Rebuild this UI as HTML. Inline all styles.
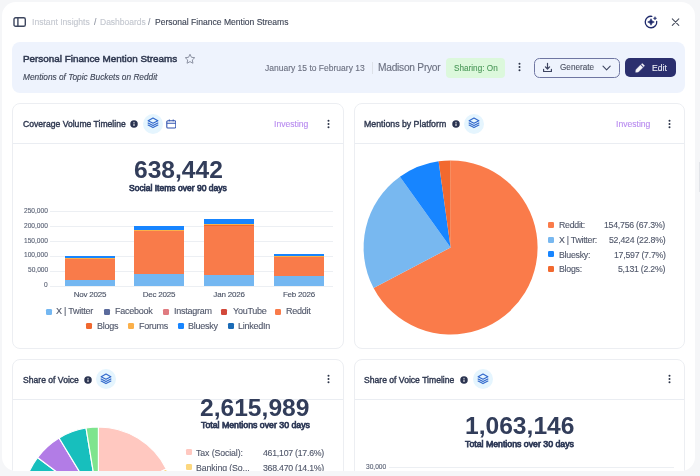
<!DOCTYPE html>
<html><head><meta charset="utf-8">
<style>
*{box-sizing:border-box;margin:0;padding:0}
html,body{width:700px;height:476px;overflow:hidden;background:#f5f6f8;font-family:"Liberation Sans",sans-serif}
.abs{position:absolute}
#panel{position:absolute;left:2px;top:2px;width:693.3px;height:468.7px;background:#fff;border-radius:14px;overflow:hidden}
#inner{position:absolute;left:-2px;top:-2px;width:700px;height:476px}
.t{position:absolute;white-space:nowrap;line-height:1;will-change:transform;-webkit-text-stroke:0.12px currentColor}
.card{position:absolute;background:#fff;border:1px solid #eceef2;border-radius:8px;overflow:hidden}
.ch{position:absolute;left:0;right:0;top:0;height:40px;border-bottom:1px solid #eaedf2}
</style></head><body>
<div id="panel"><div id="inner">
<svg class="abs" style="left:13px;top:17px" width="13" height="10" viewBox="0 0 13 10"><rect x="1" y="0.75" width="11.3" height="8.5" rx="1.6" fill="none" stroke="#3d465e" stroke-width="1.4"/><line x1="4.9" y1="1" x2="4.9" y2="9" stroke="#3d465e" stroke-width="1.4"/></svg>
<div class="t" style="left:32.30px;top:17.62px;font-size:8.6px;color:#c3c7cf;">Instant Insights</div>
<div class="t" style="left:93.60px;top:17.62px;font-size:8.6px;color:#8c92a0;">/</div>
<div class="t" style="left:100.10px;top:17.70px;font-size:8.5px;color:#c3c7cf;">Dashboards</div>
<div class="t" style="left:148.40px;top:17.62px;font-size:8.6px;color:#8c92a0;">/</div>
<div class="t" style="left:154.60px;top:17.66px;font-size:8.55px;color:#3d4455;">Personal Finance Mention Streams</div>
<svg class="abs" style="left:644px;top:15px" width="14" height="14" viewBox="0 0 14 14"><path d="M12.7 6.3 A5.75 5.75 0 1 1 7.8 1.3" fill="none" stroke="#1f2a6b" stroke-width="1.3" stroke-linecap="round"/><path d="M7 3.7 Q7.5 6.5 10.3 7 Q7.5 7.5 7 10.3 Q6.5 7.5 3.7 7 Q6.5 6.5 7 3.7 Z" fill="#1f2a6b" stroke="#1f2a6b" stroke-width="0.6" stroke-linejoin="round"/><path d="M11 1.6 Q11.2 3.1 12.7 3.3 Q11.2 3.5 11 5 Q10.8 3.5 9.3 3.3 Q10.8 3.1 11 1.6 Z" fill="#1f2a6b" stroke="#1f2a6b" stroke-width="0.4" stroke-linejoin="round"/></svg>
<svg class="abs" style="left:671px;top:18px" width="9" height="9" viewBox="0 0 9 9"><path d="M1.3 0.9 L7.8 7.4 M7.8 0.9 L1.3 7.4" stroke="#4a5060" stroke-width="1.1" stroke-linecap="round"/></svg>
<div class="abs" style="left:12px;top:42px;width:673px;height:51px;background:#eef3fd;border-radius:8px"></div>
<div class="t" style="left:22.60px;top:53.84px;font-size:9.88px;color:#2f3850;-webkit-text-stroke:0.5px currentColor;">Personal Finance Mention Streams</div>
<div class="t" style="left:22.60px;top:73.27px;font-size:8.3px;color:#3e4556;font-style:italic;">Mentions of Topic Buckets on Reddit</div>
<svg class="abs" style="left:184px;top:53px" width="12" height="12" viewBox="0 0 24 24"><path d="M12 2.5 L14.9 8.6 L21.5 9.4 L16.6 13.9 L17.9 20.5 L12 17.2 L6.1 20.5 L7.4 13.9 L2.5 9.4 L9.1 8.6 Z" fill="none" stroke="#8c92a3" stroke-width="2" stroke-linejoin="round"/></svg>
<div class="t" style="left:265.10px;top:63.80px;font-size:8.5px;color:#6b7080;">January 15 to February 13</div>
<div class="abs" style="left:371.5px;top:61.5px;width:1px;height:12px;background:#dde1e8"></div>
<div class="t" style="left:377.80px;top:62.77px;font-size:10.2px;color:#6b7080;letter-spacing:-0.25px;">Madison Pryor</div>
<div class="abs" style="left:446px;top:57.6px;width:59px;height:20px;background:#dcf8dc;border-radius:4px"></div>
<div class="t" style="left:453.70px;top:65.36px;font-size:8.2px;color:#4e9a5c;">Sharing: On</div>
<svg class="abs" style="left:518.2px;top:62.400000000000006px" width="3" height="10" viewBox="0 0 3 10"><circle cx="1.5" cy="1.75" r="1" fill="#2c3448"/><circle cx="1.5" cy="5" r="1" fill="#2c3448"/><circle cx="1.5" cy="8.25" r="1" fill="#2c3448"/></svg>
<div class="abs" style="left:534px;top:57.5px;width:85.5px;height:20px;border:1px solid #6f76a2;border-radius:5.5px"></div>
<svg class="abs" style="left:542px;top:62px" width="11" height="11" viewBox="0 0 11 11"><path d="M5.5 1.3 V7 M3.4 4.9 L5.5 7 L7.6 4.9 M1.6 7.4 V9.5 H9.4 V7.4" fill="none" stroke="#3d4460" stroke-width="1.2" stroke-linecap="round" stroke-linejoin="round"/></svg>
<div class="t" style="left:560.00px;top:64.26px;font-size:8.2px;color:#4d5364;">Generate</div>
<svg class="abs" style="left:602.3px;top:65px" width="10" height="6" viewBox="0 0 10 6"><path d="M1 1.2 L4.6 4.8 L8.2 1.2" fill="none" stroke="#3d4460" stroke-width="1.1" stroke-linecap="round" stroke-linejoin="round"/></svg>
<div class="abs" style="left:624.5px;top:57.8px;width:51px;height:19.4px;background:#2b2f6e;border-radius:5px"></div>
<svg class="abs" style="left:635px;top:63px" width="10" height="10" viewBox="0 0 10 10"><path d="M0.7 9.3 L0.9 6.7 L5.5 2.1 L7.9 4.5 L3.3 9.1 Z" fill="#f4f4f8" stroke="#f4f4f8" stroke-width="0.4" stroke-linejoin="round"/><path d="M6.3 1.3 L7.3 0.4 L9.6 2.7 L8.7 3.7 Z" fill="#f4f4f8" stroke="#f4f4f8" stroke-width="0.4" stroke-linejoin="round"/></svg>
<div class="t" style="left:651.80px;top:64.12px;font-size:8.6px;color:#eceef5;">Edit</div>
<div class="card" style="left:12px;top:103px;width:332px;height:246px"><div class="ch"></div></div>
<div class="card" style="left:353.5px;top:103px;width:331.5px;height:246px"><div class="ch"></div></div>
<div class="card" style="left:12px;top:359px;width:332px;height:140px"><div class="ch"></div></div>
<div class="card" style="left:353.5px;top:359px;width:331.5px;height:140px"><div class="ch"></div></div>
<div class="t" style="left:22.90px;top:119.82px;font-size:8.6px;color:#2f3850;-webkit-text-stroke:0.38px currentColor;">Coverage Volume Timeline</div>
<svg class="abs" style="left:130.2px;top:120px" width="8" height="8" viewBox="0 0 8 8"><circle cx="4" cy="4" r="3.75" fill="#2a3350"/><rect x="3.5" y="3.5" width="1" height="2.6" rx="0.3" fill="#fff"/><circle cx="4" cy="2.35" r="0.55" fill="#fff"/></svg>
<div class="abs" style="left:142.9px;top:113.5px;width:20px;height:20px;border-radius:50%;background:#e5f5fe"></div>
<svg class="abs" style="left:146.9px;top:117.3px" width="12" height="12" viewBox="0 0 12 12"><path d="M1.1 3.7 L6 1 L10.9 3.7 L6 6.3 Z" fill="none" stroke="#3168cc" stroke-width="1.1" stroke-linejoin="round"/><path d="M1.1 5.9 L6 8.4 L10.9 5.9 M1.1 8.1 L6 10.6 L10.9 8.1" fill="none" stroke="#3168cc" stroke-width="1.1" stroke-linejoin="round" stroke-linecap="round"/></svg>
<svg class="abs" style="left:166.2px;top:118.6px" width="10" height="10" viewBox="0 0 10 10"><rect x="0.8" y="1.7" width="9" height="7.3" rx="1.1" fill="none" stroke="#3153b0" stroke-width="1.1"/><line x1="0.8" y1="4.3" x2="9.8" y2="4.3" stroke="#3153b0" stroke-width="1.1"/><line x1="3.3" y1="0.5" x2="3.3" y2="2.3" stroke="#3153b0" stroke-width="1"/><line x1="7.2" y1="0.5" x2="7.2" y2="2.3" stroke="#3153b0" stroke-width="1"/></svg>
<div class="t" style="left:274.20px;top:119.62px;font-size:8.6px;color:#b88bef;">Investing</div>
<svg class="abs" style="left:326.9px;top:118.7px" width="3" height="10" viewBox="0 0 3 10"><circle cx="1.5" cy="1.75" r="1" fill="#2c3448"/><circle cx="1.5" cy="5" r="1" fill="#2c3448"/><circle cx="1.5" cy="8.25" r="1" fill="#2c3448"/></svg>
<div class="t" style="left:133.60px;top:157.78px;font-size:24.6px;color:#323d5a;font-weight:bold;-webkit-text-stroke:0;">638,442</div>
<div class="t" style="left:128.90px;top:184.15px;font-size:8.56px;color:#323d5a;-webkit-text-stroke:0.75px currentColor;">Social Items over 90 days</div>
<div class="abs" style="left:50px;top:210.70px;width:283px;height:1px;background:#eceff3"></div>
<div class="t" style="right:652.00px;top:207.51px;font-size:6.6px;color:#5a6275;">250,000</div>
<div class="abs" style="left:50px;top:225.70px;width:283px;height:1px;background:#eceff3"></div>
<div class="t" style="right:652.00px;top:222.51px;font-size:6.6px;color:#5a6275;">200,000</div>
<div class="abs" style="left:50px;top:240.70px;width:283px;height:1px;background:#eceff3"></div>
<div class="t" style="right:652.00px;top:237.51px;font-size:6.6px;color:#5a6275;">150,000</div>
<div class="abs" style="left:50px;top:255.60px;width:283px;height:1px;background:#eceff3"></div>
<div class="t" style="right:652.00px;top:252.41px;font-size:6.6px;color:#5a6275;">100,000</div>
<div class="abs" style="left:50px;top:270.60px;width:283px;height:1px;background:#eceff3"></div>
<div class="t" style="right:652.00px;top:267.41px;font-size:6.6px;color:#5a6275;">50,000</div>
<div class="abs" style="left:50px;top:285.60px;width:283px;height:1px;background:#eceff3"></div>
<div class="t" style="right:652.00px;top:282.41px;font-size:6.6px;color:#5a6275;">0</div>
<div class="abs" style="left:65px;top:279.60px;width:49.80px;height:6.50px;background:#74b7f1"></div>
<div class="abs" style="left:65px;top:258.80px;width:49.80px;height:20.80px;background:#f97b4a"></div>
<div class="abs" style="left:65px;top:258.30px;width:49.80px;height:0.50px;background:#f0682f"></div>
<div class="abs" style="left:65px;top:258.10px;width:49.80px;height:0.20px;background:#fbb04a"></div>
<div class="abs" style="left:65px;top:256.00px;width:49.80px;height:2.10px;background:#1785ff"></div>
<div class="abs" style="left:134.4px;top:274.40px;width:49.80px;height:11.70px;background:#74b7f1"></div>
<div class="abs" style="left:134.4px;top:230.90px;width:49.80px;height:43.50px;background:#f97b4a"></div>
<div class="abs" style="left:134.4px;top:230.30px;width:49.80px;height:0.60px;background:#f0682f"></div>
<div class="abs" style="left:134.4px;top:229.90px;width:49.80px;height:0.40px;background:#fbb04a"></div>
<div class="abs" style="left:134.4px;top:225.60px;width:49.80px;height:4.30px;background:#1785ff"></div>
<div class="abs" style="left:204px;top:275.30px;width:50.00px;height:10.80px;background:#74b7f1"></div>
<div class="abs" style="left:204px;top:225.20px;width:50.00px;height:50.10px;background:#f97b4a"></div>
<div class="abs" style="left:204px;top:224.50px;width:50.00px;height:0.70px;background:#f0682f"></div>
<div class="abs" style="left:204px;top:223.80px;width:50.00px;height:0.70px;background:#fbb04a"></div>
<div class="abs" style="left:204px;top:218.60px;width:50.00px;height:5.20px;background:#1785ff"></div>
<div class="abs" style="left:273.7px;top:276.00px;width:49.90px;height:10.10px;background:#74b7f1"></div>
<div class="abs" style="left:273.7px;top:256.60px;width:49.90px;height:19.40px;background:#f97b4a"></div>
<div class="abs" style="left:273.7px;top:256.20px;width:49.90px;height:0.40px;background:#f0682f"></div>
<div class="abs" style="left:273.7px;top:255.90px;width:49.90px;height:0.30px;background:#fbb04a"></div>
<div class="abs" style="left:273.7px;top:253.90px;width:49.90px;height:2.00px;background:#1785ff"></div>
<div class="t" style="left:89.90px;transform:translateX(-50%);top:290.93px;font-size:8.0px;color:#4a5265;letter-spacing:-0.2px;">Nov 2025</div>
<div class="t" style="left:159.30px;transform:translateX(-50%);top:290.93px;font-size:8.0px;color:#4a5265;letter-spacing:-0.2px;">Dec 2025</div>
<div class="t" style="left:229.00px;transform:translateX(-50%);top:290.93px;font-size:8.0px;color:#4a5265;letter-spacing:-0.2px;">Jan 2026</div>
<div class="t" style="left:298.60px;transform:translateX(-50%);top:290.93px;font-size:8.0px;color:#4a5265;letter-spacing:-0.2px;">Feb 2026</div>
<div class="abs" style="left:46.1px;top:308.50px;width:6px;height:6px;border-radius:1.3px;background:#74b7f1"></div>
<div class="t" style="left:56.40px;top:307.28px;font-size:9.0px;color:#50576a;letter-spacing:-0.25px;">X | Twitter</div>
<div class="abs" style="left:104px;top:308.50px;width:6px;height:6px;border-radius:1.3px;background:#5b6b9c"></div>
<div class="t" style="left:115.00px;top:307.28px;font-size:9.0px;color:#50576a;letter-spacing:-0.25px;">Facebook</div>
<div class="abs" style="left:162.9px;top:308.50px;width:6px;height:6px;border-radius:1.3px;background:#e07b80"></div>
<div class="t" style="left:173.60px;top:307.28px;font-size:9.0px;color:#50576a;letter-spacing:-0.25px;">Instagram</div>
<div class="abs" style="left:221.4px;top:308.50px;width:6px;height:6px;border-radius:1.3px;background:#d2483a"></div>
<div class="t" style="left:232.50px;top:307.28px;font-size:9.0px;color:#50576a;letter-spacing:-0.25px;">YouTube</div>
<div class="abs" style="left:275.4px;top:308.50px;width:6px;height:6px;border-radius:1.3px;background:#f97b4a"></div>
<div class="t" style="left:285.60px;top:307.28px;font-size:9.0px;color:#50576a;letter-spacing:-0.25px;">Reddit</div>
<div class="abs" style="left:86px;top:323.10px;width:6px;height:6px;border-radius:1.3px;background:#f0682f"></div>
<div class="t" style="left:96.50px;top:321.88px;font-size:9.0px;color:#50576a;letter-spacing:-0.25px;">Blogs</div>
<div class="abs" style="left:128.2px;top:323.10px;width:6px;height:6px;border-radius:1.3px;background:#fbb04a"></div>
<div class="t" style="left:138.50px;top:321.88px;font-size:9.0px;color:#50576a;letter-spacing:-0.25px;">Forums</div>
<div class="abs" style="left:178.1px;top:323.10px;width:6px;height:6px;border-radius:1.3px;background:#1785ff"></div>
<div class="t" style="left:188.10px;top:321.88px;font-size:9.0px;color:#50576a;letter-spacing:-0.25px;">Bluesky</div>
<div class="abs" style="left:227.6px;top:323.10px;width:6px;height:6px;border-radius:1.3px;background:#1b6bb6"></div>
<div class="t" style="left:237.90px;top:321.88px;font-size:9.0px;color:#50576a;letter-spacing:-0.25px;">LinkedIn</div>
<div class="t" style="left:364.30px;top:119.69px;font-size:8.75px;color:#2f3850;-webkit-text-stroke:0.38px currentColor;">Mentions by Platform</div>
<svg class="abs" style="left:451.5px;top:120px" width="8" height="8" viewBox="0 0 8 8"><circle cx="4" cy="4" r="3.75" fill="#2a3350"/><rect x="3.5" y="3.5" width="1" height="2.6" rx="0.3" fill="#fff"/><circle cx="4" cy="2.35" r="0.55" fill="#fff"/></svg>
<div class="abs" style="left:464px;top:113.5px;width:20px;height:20px;border-radius:50%;background:#e5f5fe"></div>
<svg class="abs" style="left:468px;top:117.3px" width="12" height="12" viewBox="0 0 12 12"><path d="M1.1 3.7 L6 1 L10.9 3.7 L6 6.3 Z" fill="none" stroke="#3168cc" stroke-width="1.1" stroke-linejoin="round"/><path d="M1.1 5.9 L6 8.4 L10.9 5.9 M1.1 8.1 L6 10.6 L10.9 8.1" fill="none" stroke="#3168cc" stroke-width="1.1" stroke-linejoin="round" stroke-linecap="round"/></svg>
<div class="t" style="left:615.50px;top:119.62px;font-size:8.6px;color:#b88bef;">Investing</div>
<svg class="abs" style="left:668.1px;top:118.7px" width="3" height="10" viewBox="0 0 3 10"><circle cx="1.5" cy="1.75" r="1" fill="#2c3448"/><circle cx="1.5" cy="5" r="1" fill="#2c3448"/><circle cx="1.5" cy="8.25" r="1" fill="#2c3448"/></svg>
<svg class="abs" style="left:0;top:0" width="700" height="476"><path d="M450.60 247.50 L450.60 160.50 A87 87 0 1 1 373.58 287.97 Z" fill="#fa7b4a"/><path d="M450.60 247.50 L373.58 287.97 A87 87 0 0 1 399.91 176.80 Z" fill="#78b8f0"/><path d="M450.60 247.50 L399.91 176.80 A87 87 0 0 1 438.61 161.33 Z" fill="#1785ff"/><path d="M450.60 247.50 L438.61 161.33 A87 87 0 0 1 450.60 160.50 Z" fill="#f2692f"/></svg>
<div class="abs" style="left:547.6px;top:222.10px;width:6px;height:6px;border-radius:1.3px;background:#fa7b4a"></div>
<div class="t" style="left:558.60px;top:221.39px;font-size:8.75px;color:#50576a;letter-spacing:-0.25px;">Reddit:</div>
<div class="t" style="right:34.60px;top:221.39px;font-size:8.75px;color:#50576a;letter-spacing:-0.25px;">154,756 (67.3%)</div>
<div class="abs" style="left:547.6px;top:236.75px;width:6px;height:6px;border-radius:1.3px;background:#78b8f0"></div>
<div class="t" style="left:558.60px;top:236.04px;font-size:8.75px;color:#50576a;letter-spacing:-0.25px;">X | Twitter:</div>
<div class="t" style="right:34.60px;top:236.04px;font-size:8.75px;color:#50576a;letter-spacing:-0.25px;">52,424 (22.8%)</div>
<div class="abs" style="left:547.6px;top:251.40px;width:6px;height:6px;border-radius:1.3px;background:#1785ff"></div>
<div class="t" style="left:558.60px;top:250.69px;font-size:8.75px;color:#50576a;letter-spacing:-0.25px;">Bluesky:</div>
<div class="t" style="right:34.60px;top:250.69px;font-size:8.75px;color:#50576a;letter-spacing:-0.25px;">17,597 (7.7%)</div>
<div class="abs" style="left:547.6px;top:266.05px;width:6px;height:6px;border-radius:1.3px;background:#f2692f"></div>
<div class="t" style="left:558.60px;top:265.34px;font-size:8.75px;color:#50576a;letter-spacing:-0.25px;">Blogs:</div>
<div class="t" style="right:34.60px;top:265.34px;font-size:8.75px;color:#50576a;letter-spacing:-0.25px;">5,131 (2.2%)</div>
<div class="t" style="left:22.90px;top:376.22px;font-size:8.6px;color:#2f3850;-webkit-text-stroke:0.38px currentColor;">Share of Voice</div>
<svg class="abs" style="left:83.5px;top:376px" width="8" height="8" viewBox="0 0 8 8"><circle cx="4" cy="4" r="3.75" fill="#2a3350"/><rect x="3.5" y="3.5" width="1" height="2.6" rx="0.3" fill="#fff"/><circle cx="4" cy="2.35" r="0.55" fill="#fff"/></svg>
<div class="abs" style="left:95.8px;top:369.3px;width:20px;height:20px;border-radius:50%;background:#e5f5fe"></div>
<svg class="abs" style="left:99.8px;top:373.1px" width="12" height="12" viewBox="0 0 12 12"><path d="M1.1 3.7 L6 1 L10.9 3.7 L6 6.3 Z" fill="none" stroke="#3168cc" stroke-width="1.1" stroke-linejoin="round"/><path d="M1.1 5.9 L6 8.4 L10.9 5.9 M1.1 8.1 L6 10.6 L10.9 8.1" fill="none" stroke="#3168cc" stroke-width="1.1" stroke-linejoin="round" stroke-linecap="round"/></svg>
<svg class="abs" style="left:326.9px;top:374.4px" width="3" height="10" viewBox="0 0 3 10"><circle cx="1.5" cy="1.75" r="1" fill="#2c3448"/><circle cx="1.5" cy="5" r="1" fill="#2c3448"/><circle cx="1.5" cy="8.25" r="1" fill="#2c3448"/></svg>
<div class="t" style="left:200.10px;top:395.58px;font-size:24.6px;color:#323d5a;font-weight:bold;-webkit-text-stroke:0;">2,615,989</div>
<div class="t" style="left:200.60px;top:421.49px;font-size:8.75px;color:#323d5a;-webkit-text-stroke:0.75px currentColor;">Total Mentions over 30 days</div>
<svg class="abs" style="left:0;top:0" width="700" height="476"></svg>
<svg class="abs" style="left:0;top:0" width="700" height="476"><path d="M98.40 503.00 L98.40 427.00 A76 76 0 0 1 166.33 468.92 Z" fill="#ffc8c0" stroke="#fff" stroke-width="1.2" stroke-linejoin="round"/><path d="M98.40 503.00 L166.33 468.92 A76 76 0 0 1 167.76 534.06 Z" fill="#fcd77e" stroke="#fff" stroke-width="1.2" stroke-linejoin="round"/><path d="M98.40 503.00 L167.76 534.06 A76 76 0 0 1 90.30 578.57 Z" fill="#f5a66b" stroke="#fff" stroke-width="1.2" stroke-linejoin="round"/><path d="M98.40 503.00 L90.30 578.57 A76 76 0 0 1 32.50 540.86 Z" fill="#a0d0f0" stroke="#fff" stroke-width="1.2" stroke-linejoin="round"/><path d="M98.40 503.00 L32.50 540.86 A76 76 0 0 1 25.03 483.18 Z" fill="#e8a0d0" stroke="#fff" stroke-width="1.2" stroke-linejoin="round"/><path d="M98.40 503.00 L25.03 483.18 A76 76 0 0 1 37.48 457.56 Z" fill="#17bfbd" stroke="#fff" stroke-width="1.2" stroke-linejoin="round"/><path d="M98.40 503.00 L37.48 457.56 A76 76 0 0 1 59.06 437.98 Z" fill="#b27ce6" stroke="#fff" stroke-width="1.2" stroke-linejoin="round"/><path d="M98.40 503.00 L59.06 437.98 A76 76 0 0 1 86.04 428.01 Z" fill="#17bfbd" stroke="#fff" stroke-width="1.2" stroke-linejoin="round"/><path d="M98.40 503.00 L86.04 428.01 A76 76 0 0 1 98.40 427.00 Z" fill="#7ee48e" stroke="#fff" stroke-width="1.2" stroke-linejoin="round"/></svg>
<div class="abs" style="left:185.7px;top:449.20px;width:6px;height:6px;border-radius:1.3px;background:#ffc8c0"></div>
<div class="t" style="left:196.00px;top:448.59px;font-size:8.75px;color:#50576a;letter-spacing:-0.1px;">Tax (Social):</div>
<div class="t" style="right:375.80px;top:448.59px;font-size:8.75px;color:#50576a;letter-spacing:-0.25px;">461,107 (17.6%)</div>
<div class="abs" style="left:185.7px;top:464.30px;width:6px;height:6px;border-radius:1.3px;background:#fcd77e"></div>
<div class="t" style="left:196.00px;top:463.69px;font-size:8.75px;color:#50576a;letter-spacing:-0.1px;">Banking (So...</div>
<div class="t" style="right:375.80px;top:463.69px;font-size:8.75px;color:#50576a;letter-spacing:-0.25px;">368,470 (14.1%)</div>
<div class="t" style="left:364.30px;top:376.22px;font-size:8.6px;color:#2f3850;-webkit-text-stroke:0.38px currentColor;">Share of Voice Timeline</div>
<svg class="abs" style="left:459.5px;top:376px" width="8" height="8" viewBox="0 0 8 8"><circle cx="4" cy="4" r="3.75" fill="#2a3350"/><rect x="3.5" y="3.5" width="1" height="2.6" rx="0.3" fill="#fff"/><circle cx="4" cy="2.35" r="0.55" fill="#fff"/></svg>
<div class="abs" style="left:472.6px;top:369.3px;width:20px;height:20px;border-radius:50%;background:#e5f5fe"></div>
<svg class="abs" style="left:476.6px;top:373.1px" width="12" height="12" viewBox="0 0 12 12"><path d="M1.1 3.7 L6 1 L10.9 3.7 L6 6.3 Z" fill="none" stroke="#3168cc" stroke-width="1.1" stroke-linejoin="round"/><path d="M1.1 5.9 L6 8.4 L10.9 5.9 M1.1 8.1 L6 10.6 L10.9 8.1" fill="none" stroke="#3168cc" stroke-width="1.1" stroke-linejoin="round" stroke-linecap="round"/></svg>
<svg class="abs" style="left:668.4px;top:374.3px" width="3" height="10" viewBox="0 0 3 10"><circle cx="1.5" cy="1.75" r="1" fill="#2c3448"/><circle cx="1.5" cy="5" r="1" fill="#2c3448"/><circle cx="1.5" cy="8.25" r="1" fill="#2c3448"/></svg>
<div class="t" style="left:465.10px;top:413.58px;font-size:24.6px;color:#323d5a;font-weight:bold;-webkit-text-stroke:0;">1,063,146</div>
<div class="t" style="left:465.00px;top:440.19px;font-size:8.75px;color:#323d5a;-webkit-text-stroke:0.75px currentColor;">Total Mentions over 30 days</div>
<div class="abs" style="left:389.3px;top:467px;width:285px;height:1px;background:#eceff3"></div>
<div class="t" style="right:313.80px;top:463.81px;font-size:6.6px;color:#5a6275;">30,000</div>
</div></div>
<div style="position:absolute;left:699px;top:162px;width:1px;height:30px;background:#e2e4e8"></div>
</body></html>
